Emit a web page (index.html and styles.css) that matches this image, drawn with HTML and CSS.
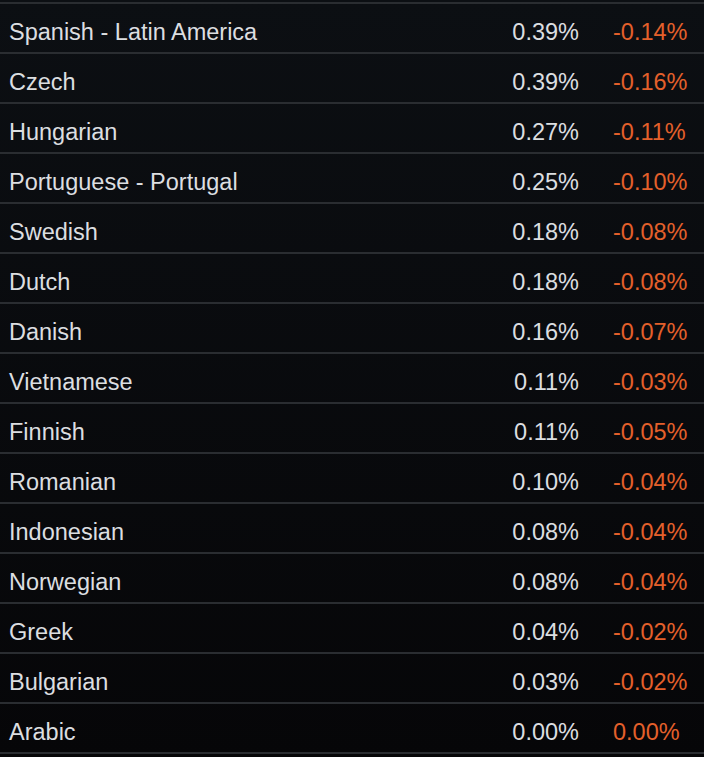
FILE: index.html
```html
<!DOCTYPE html>
<html lang="en">
<head>
  <meta charset="UTF-8" />
  <meta name="viewport" content="width=device-width, initial-scale=1.0"/>
  <title>Language share</title>
  <link rel="stylesheet" href="styles.css">
</head>
<body>
  <div class="table">
    <div class="row"><span class="name">Spanish - Latin America</span><span class="share">0.39%</span><span class="change">-0.14%</span></div>
    <div class="row"><span class="name">Czech</span><span class="share">0.39%</span><span class="change">-0.16%</span></div>
    <div class="row"><span class="name">Hungarian</span><span class="share">0.27%</span><span class="change">-0.11%</span></div>
    <div class="row"><span class="name">Portuguese - Portugal</span><span class="share">0.25%</span><span class="change">-0.10%</span></div>
    <div class="row"><span class="name">Swedish</span><span class="share">0.18%</span><span class="change">-0.08%</span></div>
    <div class="row"><span class="name">Dutch</span><span class="share">0.18%</span><span class="change">-0.08%</span></div>
    <div class="row"><span class="name">Danish</span><span class="share">0.16%</span><span class="change">-0.07%</span></div>
    <div class="row"><span class="name">Vietnamese</span><span class="share">0.11%</span><span class="change">-0.03%</span></div>
    <div class="row"><span class="name">Finnish</span><span class="share">0.11%</span><span class="change">-0.05%</span></div>
    <div class="row"><span class="name">Romanian</span><span class="share">0.10%</span><span class="change">-0.04%</span></div>
    <div class="row"><span class="name">Indonesian</span><span class="share">0.08%</span><span class="change">-0.04%</span></div>
    <div class="row"><span class="name">Norwegian</span><span class="share">0.08%</span><span class="change">-0.04%</span></div>
    <div class="row"><span class="name">Greek</span><span class="share">0.04%</span><span class="change">-0.02%</span></div>
    <div class="row"><span class="name">Bulgarian</span><span class="share">0.03%</span><span class="change">-0.02%</span></div>
    <div class="row"><span class="name">Arabic</span><span class="share">0.00%</span><span class="change">0.00%</span></div>
  </div>
</body>
</html>
```

FILE: styles.css
```css
html {
  background: #08090c;
}

body {
  margin: 0;
  padding-top: 2px;
  min-height: 757px;
  box-sizing: border-box;
  background: linear-gradient(to bottom, #0c0f13, #060608);
  color: #dcdee0;
  font-family: "Liberation Sans", Arial, sans-serif;
  font-size: 23.5px;
}

.table {
  border-bottom: 2px solid #2a2d31;
}

.row {
  display: grid;
  grid-template-columns: 1fr 112px 91px;
  column-gap: 34px;
  align-items: center;
  height: 50px;
  box-sizing: border-box;
  padding-top: 9px;
  border-top: 2px solid #2a2d31;
}

.name {
  padding-left: 9px;
  white-space: nowrap;
}

.share {
  text-align: right;
}

.change {
  color: #e4602b;
}
```
